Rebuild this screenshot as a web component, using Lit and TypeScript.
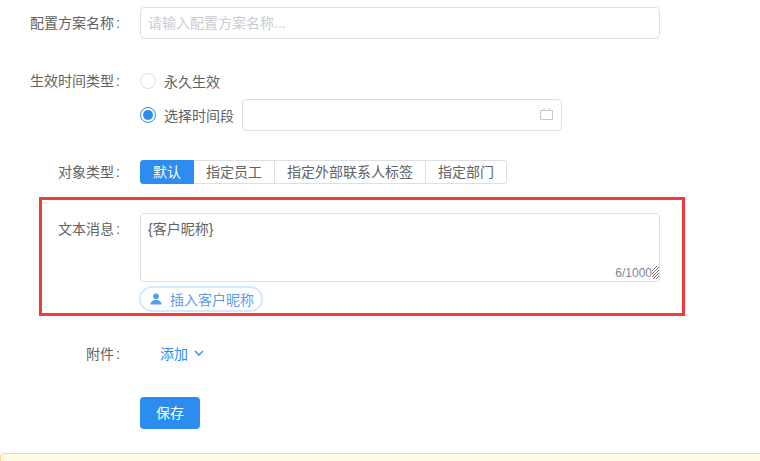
import { css, html, LitElement } from "lit";
import { customElement } from "lit/decorators.js";

const TABS = ["默认", "指定员工", "指定外部联系人标签", "指定部门"];

@customElement("app-root")
export class AppRoot extends LitElement {
  static override styles = css`
    :host {
      display: block;
      position: relative;
      width: 760px;
      height: 461px;
      overflow: hidden;
      background: #fff;
      color: #606266;
      font-family: "Liberation Sans", "Noto Sans CJK SC", sans-serif;
      font-size: 14px;
    }

    .form {
      display: flex;
      flex-direction: column;
      padding-top: 7px;
      width: 660px;
    }

    .row {
      display: flex;
    }

    .label {
      flex: none;
      width: 120px;
      text-align: right;
      line-height: 32px;
      margin-right: 20px;
    }

    .colon {
      margin-left: 2px;
    }

    .body {
      flex: 1;
      min-width: 0;
    }

    .input {
      box-sizing: border-box;
      height: 32px;
      border: 1px solid #dcdfe6;
      border-radius: 4px;
      background: #fff;
      padding: 0 7px;
      line-height: 30px;
    }

    .placeholder {
      color: #c9ccd2;
    }

    .name-row {
      margin-bottom: 26px;
    }

    .radios {
      display: flex;
      flex-direction: column;
      gap: 2px;
    }

    .radio-line {
      display: flex;
      align-items: center;
      height: 32px;
    }

    .radio {
      box-sizing: border-box;
      width: 16px;
      height: 16px;
      border-radius: 50%;
      border: 1px solid #dcdfe6;
      margin-right: 8px;
      flex: none;
    }

    .radio.checked {
      border-color: #2d8cf0;
      display: flex;
      align-items: center;
      justify-content: center;
    }

    .radio.checked::after {
      content: "";
      width: 10px;
      height: 10px;
      border-radius: 50%;
      background: #2d8cf0;
    }

    .date {
      width: 320px;
      margin-left: 8px;
      display: flex;
      align-items: center;
      justify-content: flex-end;
      padding: 0 8px 0 0;
    }

    .date svg {
      display: block;
      margin-bottom: 2px;
    }

    .type-row {
      margin-top: 29px;
      align-items: center;
    }

    .type-row .label {
      line-height: 24px;
    }

    .tabs {
      display: flex;
      height: 24px;
    }

    .tab {
      box-sizing: border-box;
      border: 1px solid #dcdfe6;
      border-left: 0;
      padding: 0 12px;
      line-height: 22px;
      white-space: nowrap;
    }

    .tab:first-child {
      background: #2d8cf0;
      border: 1px solid #2d8cf0;
      color: #fff;
      border-radius: 3px 0 0 3px;
    }

    .tab:last-child {
      border-radius: 0 3px 3px 0;
    }

    .msg-row {
      margin-top: 29px;
    }

    .textarea {
      box-sizing: border-box;
      position: relative;
      height: 69px;
      border: 1px solid #dcdfe6;
      border-radius: 4px;
      padding: 5px 7px;
      line-height: 21px;
    }

    .count {
      position: absolute;
      right: 7px;
      bottom: 0;
      font-size: 12px;
      line-height: 16px;
      color: #808695;
    }

    .grip {
      position: absolute;
      right: 0;
      bottom: 1px;
      display: block;
    }

    .pill {
      box-sizing: border-box;
      display: inline-flex;
      align-items: center;
      height: 26px;
      margin: 4px 0 0 -1px;
      padding: 0 7px 0 9px;
      border: 2px solid #d5e8fc;
      border-radius: 13px;
      color: #5a9cf0;
      white-space: nowrap;
    }

    .pill svg {
      display: block;
      margin-right: 8px;
    }

    .attach-row {
      margin-top: 26px;
    }

    .add {
      display: flex;
      align-items: center;
      height: 30px;
      margin-left: 20px;
      color: #2d8cf0;
    }

    .add svg {
      display: block;
      margin-left: 6px;
    }

    .save-row {
      margin: 27px 0 0 140px;
    }

    .save {
      width: 60px;
      height: 32px;
      border-radius: 4px;
      background: #2d8cf0;
      color: #fff;
      text-align: center;
      line-height: 32px;
    }

    .banner {
      box-sizing: border-box;
      height: 30px;
      margin-top: 24px;
      width: 800px;
      border: 1px solid #ffd98c;
      border-radius: 4px;
      background: #fff9e6;
    }

    .mark {
      position: absolute;
      left: 39px;
      top: 197px;
      width: 646px;
      height: 119px;
      box-sizing: border-box;
      border: 3px solid #f53838;
      pointer-events: none;
    }
  `;

  override render() {
    const colon = html`<span class="colon">:</span>`;
    return html`
      <div class="form">
        <div class="row name-row">
          <div class="label">配置方案名称${colon}</div>
          <div class="body">
            <div class="input placeholder">请输入配置方案名称...</div>
          </div>
        </div>

        <div class="row">
          <div class="label">生效时间类型${colon}</div>
          <div class="body radios">
            <div class="radio-line"><span class="radio"></span>永久生效</div>
            <div class="radio-line">
              <span class="radio checked"></span>选择时间段
              <div class="input date">
                <svg width="13" height="12" viewBox="0 0 13 12" fill="none" stroke="#c5c8ce">
                  <path d="M.5 2.500h12v9h-12zM4 0v2.500M9 0v2.500" />
                </svg>
              </div>
            </div>
          </div>
        </div>

        <div class="row type-row">
          <div class="label">对象类型${colon}</div>
          <div class="tabs">${TABS.map((t) => html`<div class="tab">${t}</div>`)}</div>
        </div>

        <div class="row msg-row">
          <div class="label">文本消息${colon}</div>
          <div class="body">
            <div class="textarea">
              {客户昵称}
              <span class="count">6/1000</span>
              <svg class="grip" width="7" height="14" viewBox="0 0 7 14" stroke="#777" fill="none">
                <path d="M0 5L5 0M0 8L7 1M0 11L7 4M1 13L7 7M4 13L7 10" />
              </svg>
            </div>
            <div class="pill">
              <svg width="12" height="12" viewBox="0 0 12 12" fill="#4f9bf2">
                <circle cx="6" cy="3.200" r="2.800" />
                <path d="M.5 11.500c0-3 2.400-4.500 5.500-4.500s5.500 1.500 5.500 4.500z" />
              </svg>
              插入客户昵称
            </div>
          </div>
        </div>

        <div class="row attach-row">
          <div class="label">附件${colon}</div>
          <div class="add">
            添加
            <svg width="10" height="6" viewBox="0 0 10 6" fill="none" stroke="#2d8cf0" stroke-width="1.3">
              <path d="M1 1l4 4 4-4" />
            </svg>
          </div>
        </div>

        <div class="save-row"><div class="save">保存</div></div>
        <div class="banner"></div>
      </div>
      <div class="mark"></div>
    `;
  }
}

declare global {
  interface HTMLElementTagNameMap {
    "app-root": AppRoot;
  }
}
